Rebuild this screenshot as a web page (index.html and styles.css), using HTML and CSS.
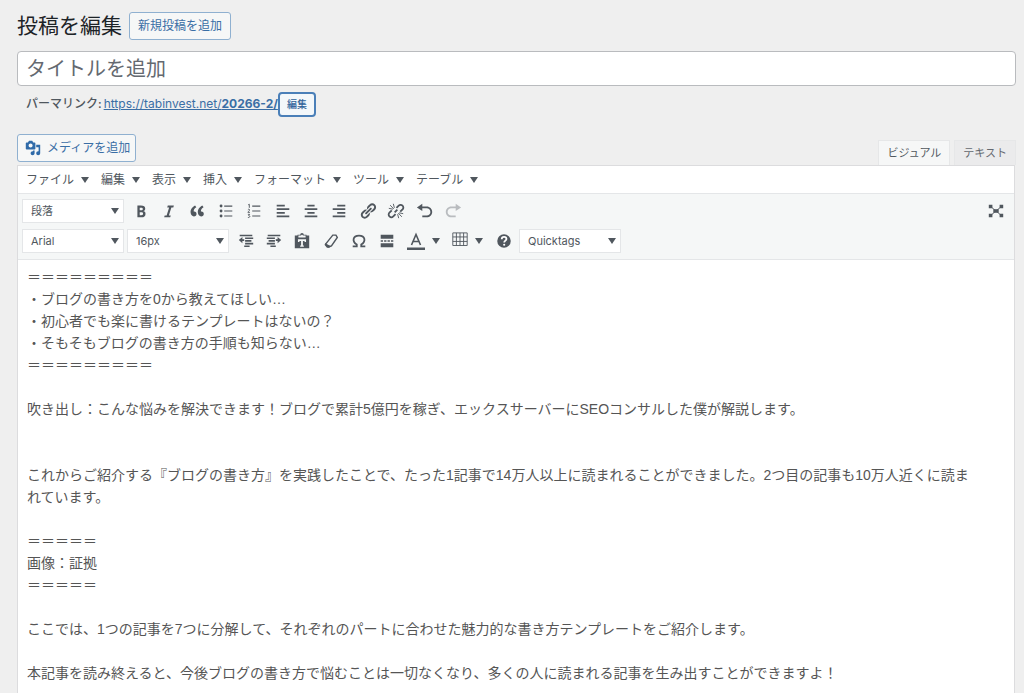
FILE: index.html
```html
<!DOCTYPE html>
<html lang="ja">
<head>
<meta charset="utf-8">
<meta name="viewport" content="width=device-width, initial-scale=1">
<title>投稿を編集</title>
<link rel="stylesheet" href="styles.css">
</head>
<body>
<main class="page">
  <header class="page-head">
    <h1 class="page-title">投稿を編集</h1>
    <a class="btn" href="#">新規投稿を追加</a>
  </header>

  <input class="title-input" type="text" placeholder="タイトルを追加" aria-label="タイトルを追加">

  <div class="permalink">
    <span class="permalink-label">パーマリンク:</span>
    <a class="permalink-url" href="#">https://tabinvest.net/<b>20266-2/</b></a>
    <button class="btn-small" type="button">編集</button>
  </div>

  <div class="editor-tools">
    <button class="btn btn-media" type="button">
      <svg class="media-icon" viewBox="0 0 20 20" aria-hidden="true"><path d="M13 11V4c0-.55-.45-1-1-1h-1.67L9 1H5L3.67 3H2c-.55 0-1 .45-1 1v7c0 .55.45 1 1 1h10c.55 0 1-.45 1-1zM7 4.5c1.38 0 2.5 1.12 2.5 2.5S8.38 9.5 7 9.5 4.5 8.38 4.5 7 5.62 4.5 7 4.5zM14 6h5v10.5c0 1.38-1.12 2.5-2.5 2.5S14 17.88 14 16.5s1.12-2.5 2.5-2.5c.17 0 .34.02.5.05V9h-3V6zm-4 8.05V13h2v3.5c0 1.38-1.12 2.5-2.5 2.5S7 17.88 7 16.5 8.12 14 9.5 14c.17 0 .34.02.5.05z"/></svg>
      メディアを追加
    </button>
    <div class="tabs">
      <button class="tab tab-active" type="button">ビジュアル</button>
      <button class="tab" type="button">テキスト</button>
    </div>
  </div>

  <section class="editor">
    <nav class="menubar">
      <button class="menu" type="button">ファイル<span class="caret"></span></button>
      <button class="menu" type="button">編集<span class="caret"></span></button>
      <button class="menu" type="button">表示<span class="caret"></span></button>
      <button class="menu" type="button">挿入<span class="caret"></span></button>
      <button class="menu" type="button">フォーマット<span class="caret"></span></button>
      <button class="menu" type="button">ツール<span class="caret"></span></button>
      <button class="menu" type="button">テーブル<span class="caret"></span></button>
    </nav>

    <div class="toolbar">
      <div class="row">
        <div class="pick"><select aria-label="段落"><option>段落</option></select><span class="caret"></span></div>
        <div class="group">
          <button class="tool" type="button" aria-label="太字"><svg viewBox="0 0 20 20"><path d="M6 4v13h4.54c1.37 0 2.46-.33 3.26-1 .8-.66 1.2-1.58 1.2-2.77 0-.84-.17-1.51-.51-2.01s-.9-.85-1.67-1.03v-.09c.57-.1 1.02-.4 1.36-.9s.51-1.13.51-1.91c0-1.14-.39-1.98-1.17-2.5C12.75 4.26 11.5 4 9.78 4H6zm2.57 5.15V6.26h1.36c.73 0 1.27.11 1.61.32.34.22.51.58.51 1.07 0 .54-.16.92-.47 1.15s-.82.35-1.51.35h-1.5zm0 2.19h1.6c1.44 0 2.16.53 2.16 1.61 0 .6-.17 1.05-.51 1.34s-.86.43-1.57.43H8.57v-3.38z"/></svg></button>
          <button class="tool" type="button" aria-label="イタリック"><svg viewBox="0 0 20 20"><path d="M14.78 6h-2.13l-2.8 9h2.12l-.62 2H4.6l.62-2h2.14l2.8-9H8.03l.62-2h6.75z"/></svg></button>
          <button class="tool" type="button" aria-label="引用"><svg viewBox="0 0 20 20"><path d="M9.49 13.22c0-.74-.2-1.38-.61-1.9-.62-.78-1.83-.88-2.53-.72-.29-1.65 1.11-3.75 2.92-4.65L7.88 4c-2.73 1.3-5.42 4.28-4.96 8.05C3.21 14.43 4.59 16 6.54 16c.85 0 1.56-.25 2.12-.75s.83-1.18.83-2.03zm8.05 0c0-.74-.2-1.38-.61-1.9-.63-.78-1.83-.88-2.53-.72-.29-1.65 1.11-3.75 2.92-4.65L15.93 4c-2.73 1.3-5.41 4.28-4.95 8.05.29 2.38 1.66 3.95 3.61 3.95.85 0 1.56-.25 2.12-.75s.83-1.18.83-2.03z"/></svg></button>
        </div>
        <div class="group">
          <button class="tool" type="button" aria-label="箇条書き"><svg viewBox="0 0 20 20"><circle cx="4.5" cy="4.5" r="1.6"/><circle cx="4.5" cy="10" r="1.6"/><circle cx="4.5" cy="15.5" r="1.6"/><path d="M8 4h9v1.2H8zM8 9.4h9v1.2H8zM8 15h9v1.2H8z"/></svg></button>
          <button class="tool" type="button" aria-label="番号付きリスト"><svg viewBox="0 0 20 20"><path d="M8 4h9v1.2H8zM8 9.4h9v1.2H8zM8 15h9v1.2H8z"/><path class="line thin" d="M3.5 3.2l1.3-.7v4M3.2 8.6c.4-.8 2-.7 2 .3 0 .8-2 1.6-2 2.6h2.3M3.2 13.7h2l-1.1 1.5c1.800 0 1.700 2.400-.9 2"/></svg></button>
        </div>
        <div class="group">
          <button class="tool" type="button" aria-label="左寄せ"><svg viewBox="0 0 20 20"><path d="M12 5V3H3v2h9zm5 4V7H3v2h14zm-5 4v-2H3v2h9zm5 4v-2H3v2h14z"/></svg></button>
          <button class="tool" type="button" aria-label="中央揃え"><svg viewBox="0 0 20 20"><path d="M14 5V3H6v2h8zm3 4V7H3v2h14zm-3 4v-2H6v2h8zm3 4v-2H3v2h14z"/></svg></button>
          <button class="tool" type="button" aria-label="右寄せ"><svg viewBox="0 0 20 20"><path d="M17 5V3H8v2h9zm0 4V7H3v2h14zm0 4v-2H8v2h9zm0 4v-2H3v2h14z"/></svg></button>
        </div>
        <div class="group">
          <button class="tool" type="button" aria-label="リンクの挿入"><svg viewBox="0 0 20 20"><path d="M17.74 2.76c1.68 1.69 1.68 4.41 0 6.1l-1.53 1.52c-1.12 1.12-2.7 1.47-4.14 1.09l2.62-2.61.76-.77.76-.76c.84-.84.84-2.2 0-3.04-.84-.85-2.2-.85-3.04 0l-.77.76-3.38 3.38c-.37-1.44-.02-3.02 1.1-4.14l1.52-1.53c1.69-1.68 4.42-1.68 6.1 0zM8.59 13.43l5.34-5.34c.42-.42.42-1.1 0-1.52-.44-.43-1.13-.39-1.53 0l-5.33 5.34c-.42.42-.42 1.1 0 1.52.44.43 1.13.39 1.52 0zm-.76 2.29l4.14-4.15c.38 1.44.03 3.02-1.09 4.14l-1.52 1.53c-1.69 1.68-4.41 1.68-6.1 0-1.68-1.68-1.68-4.42 0-6.1l1.53-1.52c1.12-1.12 2.7-1.47 4.14-1.1l-4.14 4.15c-.85.84-.85 2.2 0 3.05.84.84 2.2.84 3.04 0z"/></svg></button>
          <button class="tool" type="button" aria-label="リンクの削除"><svg viewBox="0 0 20 20"><path class="line" d="M10.500 6.500l2.500-2.500a3 3 0 0 1 4.300 4.200l-2.600 2.600M9.500 13.500L7 16a3 3 0 0 1-4.300-4.200l2.600-2.600M8.500 11.500l3-3"/><path class="line thin" d="M7 2l1.200 4.500M3.500 3.500l4 4.200M2 7l4.500 1M13 18l-1.200-4.500M16.500 16.500l-4-4.200M18 13l-4.500-1"/></svg></button>
        </div>
        <div class="group">
          <button class="tool" type="button" aria-label="取り消し"><svg viewBox="0 0 20 20"><path d="M12 5H7V2L1 6l6 4V7h5c2.2 0 4 1.8 4 4s-1.8 4-4 4H7v2h5c3.3 0 6-2.7 6-6s-2.7-6-6-6z"/></svg></button>
          <button class="tool" type="button" aria-label="やり直し" disabled><svg viewBox="0 0 20 20"><path d="M8 5h5V2l6 4-6 4V7H8c-2.200 0-4 1.800-4 4s1.800 4 4 4h5v2H8c-3.300 0-6-2.700-6-6s2.700-6 6-6z"/></svg></button>
        </div>
        <button class="tool tool-full" type="button" aria-label="集中執筆モード"><svg viewBox="0 0 20 20"><path d="M7 8h6v4H7z"/><path d="M2 3h4v4H2zM14 3h4v4h-4zM2 13h4v4H2zM14 13h4v4h-4z"/><path class="line thin" d="M4 5l12 10M16 5L4 15"/></svg></button>
      </div>

      <div class="row">
        <div class="pick"><select aria-label="フォント"><option>Arial</option></select><span class="caret"></span></div>
        <div class="pick"><select aria-label="フォントサイズ"><option>16px</option></select><span class="caret"></span></div>
        <div class="group">
          <button class="tool" type="button" aria-label="インデントを減らす"><svg viewBox="0 0 20 20"><path d="M3 3h14v1.800H3zM9 6h9v1.800H9zM9 9h7v1.800H9zM9 12h9v1.800H9zM8 15h6v1.800H8zM6 5.500v7L2 9z"/><path d="M5 8h3v2H5z"/></svg></button>
          <button class="tool" type="button" aria-label="インデントを増やす"><svg viewBox="0 0 20 20"><path d="M3 3h14v1.800H3zM2 6h9v1.800H2zM4 9h7v1.800H4zM2 12h9v1.800H2zM6 15h6v1.800H6zM14 5.500v7L18 9z"/><path d="M12 8h3v2h-3z"/></svg></button>
          <button class="tool" type="button" aria-label="テキストとしてペースト"><svg viewBox="0 0 20 20"><path fill-rule="evenodd" d="M2 4h3V3h3a2 2 0 0 1 4 0h3v1h3v14H2zM6 4v2h8V4h-3a1 1 0 0 0-2 0zM5.500 8v3H7l.3-1H9v5H8v1.500h4V15h-1v-5h1.700l.3 1h1.500V8z"/></svg></button>
        </div>
        <div class="group">
          <button class="tool" type="button" aria-label="書式設定をクリア"><svg viewBox="0 0 20 20"><path class="line medium" d="M12 3.500h3.500L17 6l-6.500 9.500L7 16.500 4 13.500z"/><path d="M3.500 12.500l5 2.500 1.800 1-2.300 1.500H5.500l-2.500-3z"/></svg></button>
          <button class="tool" type="button" aria-label="特殊文字"><svg viewBox="0 0 20 20"><path class="line" d="M3 16h4.500v-2C2 10.500 3 4 10 4s8 6.500 2.500 10v2H17"/></svg></button>
          <button class="tool" type="button" aria-label="続きを読む"><svg viewBox="0 0 20 20"><path d="M3 3h14v4.500H3zM3 9.200h2.600v1.600H3zM6.800 9.200h2.600v1.600H6.800zM10.600 9.200h2.600v1.600h-2.600zM14.400 9.200H17v1.600h-2.600zM3 12.500h14V17H3z"/></svg></button>
        </div>
        <button class="tool tool-split" type="button" aria-label="テキスト色"><svg class="wide" viewBox="0 0 20 20"><path d="M1 16.500h18V19H1z"/><path class="line medium" d="M5.500 14L10 3.500 14.500 14M7 10.500h6"/></svg><span class="caret"></span></button>
        <button class="tool tool-split tool-table" type="button" aria-label="表"><svg viewBox="0 0 20 20"><path class="line thin" d="M2 1h16v14H2zM2 5.500h16M2 10.500h16M6 1v14M10 1v14M14 1v14"/></svg><span class="caret"></span></button>
        <button class="tool" type="button" aria-label="ヘルプ"><svg viewBox="0 0 20 20"><circle cx="10" cy="10" r="7.500"/><path class="mark" d="M7.500 8c0-3.500 5.200-3.200 5.200-.3 0 1.800-2.500 2-2.500 4"/><circle class="dot" cx="10.200" cy="14.200" r="1.200"/></svg></button>
        <div class="pick"><select aria-label="Quicktags"><option>Quicktags</option></select><span class="caret"></span></div>
      </div>
    </div>

    <article class="content" contenteditable="true" spellcheck="false">
      <p>＝＝＝＝＝＝＝＝＝<br>・ブログの書き方を0から教えてほしい…<br>・初心者でも楽に書けるテンプレートはないの？<br>・そもそもブログの書き方の手順も知らない…<br>＝＝＝＝＝＝＝＝＝</p>
      <p>吹き出し：こんな悩みを解決できます！ブログで累計5億円を稼ぎ、エックスサーバーにSEOコンサルした僕が解説します。<br><br></p>
      <p>これからご紹介する『ブログの書き方』を実践したことで、たった1記事で14万人以上に読まれることができました。2つ目の記事も10万人近くに読ま<br>れています。</p>
      <p>＝＝＝＝＝<br>画像：証拠<br>＝＝＝＝＝</p>
      <p>ここでは、1つの記事を7つに分解して、それぞれのパートに合わせた魅力的な書き方テンプレートをご紹介します。</p>
      <p>本記事を読み終えると、今後ブログの書き方で悩むことは一切なくなり、多くの人に読まれる記事を生み出すことができますよ！</p>
    </article>
  </section>
</main>
</body>
</html>
```

FILE: styles.css
```css
* {
  box-sizing: border-box;
}

body {
  margin: 0;
  background: #efefef;
  color: #50575e;
  font: 12px/18px Inter, "Noto Sans CJK JP", sans-serif;
}

button,
input,
select {
  margin: 0;
  font: inherit;
  color: inherit;
}

button {
  padding: 0;
  border: 0;
  background: none;
  white-space: nowrap;
}

.page {
  display: flex;
  flex-direction: column;
  min-height: 100vh;
  padding: 11px 8px 0 17px;
}

.page-head {
  display: flex;
  align-items: center;
  gap: 7px;
  height: 30px;
}

.page-title {
  margin: 0;
  color: #1d2327;
  font-size: 21px;
  line-height: 30px;
  font-weight: 400;
}

.btn {
  display: flex;
  align-items: center;
  height: 28px;
  padding: 0 8px;
  border: 1px solid #8fb0d0;
  border-radius: 3px;
  background: #f6f7f7;
  color: #3a6ea5;
  text-decoration: none;
}

.title-input {
  width: 100%;
  height: 35px;
  margin-top: 10px;
  padding: 0 8px;
  border: 1px solid #b9bbbe;
  border-radius: 4px;
  background: #fff;
  font-size: 20px;
}

.title-input::placeholder {
  color: #646970;
  opacity: 1;
}

.permalink {
  display: flex;
  align-items: center;
  height: 26px;
  margin-top: 5px;
  padding-left: 9px;
}

.permalink-label {
  margin-right: 2px;
  font-weight: 500;
}

.permalink-url {
  color: #3a6ea5;
}

.btn-small {
  height: 25px;
  padding: 0 7px;
  border: 2px solid #4a7fb8;
  border-radius: 4px;
  background: #f3f7fa;
  color: #2f6299;
  font-size: 10px;
  font-weight: 500;
}

.editor-tools {
  display: flex;
  justify-content: space-between;
  height: 48px;
  padding-top: 17px;
}

.btn-media {
  gap: 6px;
  padding: 0 5px 0 7px;
}

.media-icon {
  width: 16px;
  height: 16px;
  fill: #2f6aa8;
}

.tabs {
  display: flex;
  align-items: flex-end;
  gap: 4px;
}

.tab {
  height: 25px;
  padding: 0 8px;
  border: 1px solid #e6e7e8;
  border-bottom: 0;
  background: #ebebec;
  color: #646970;
  font-size: 11px;
}

.tab-active {
  background: #f6f7f7;
  color: #50575e;
}

.editor {
  flex: 1;
  margin-right: 1px;
  border: 1px solid #dcdcde;
  border-bottom: 0;
  background: #fff;
}

.menubar {
  display: flex;
  gap: 12px;
  height: 27px;
  padding-left: 8px;
}

.menu {
  display: flex;
  align-items: center;
  gap: 7px;
}

.caret {
  flex: none;
  border: 4px solid transparent;
  border-top: 6px solid #50575e;
  border-bottom: 0;
}

.toolbar {
  display: flex;
  flex-direction: column;
  gap: 5px;
  padding: 4px 4px 6px;
  border-top: 1px solid #e4e6e8;
  border-bottom: 1px solid #e4e6e8;
  background: #f5f7f7;
}

.row {
  display: flex;
  align-items: center;
  gap: 1px;
  height: 25px;
}

.pick {
  position: relative;
  width: 102px;
  margin-right: 2px;
}

.pick select {
  display: block;
  width: 100%;
  height: 24px;
  padding: 0 8px;
  border: 1px solid #e4e6e8;
  border-radius: 0;
  background: #fff;
  appearance: none;
  font-size: 11px;
}

.pick .caret {
  position: absolute;
  top: 9px;
  right: 5px;
  pointer-events: none;
}

.group {
  display: flex;
}

.tool {
  display: flex;
  align-items: center;
  justify-content: center;
  width: 28px;
  height: 24px;
}

.tool svg {
  width: 18px;
  height: 18px;
  fill: #50575e;
}

.tool .line {
  fill: none;
  stroke: #50575e;
  stroke-width: 2;
}

.tool .medium {
  stroke-width: 1.6;
}

.tool .thin {
  stroke-width: 1;
}

.tool .mark {
  fill: none;
  stroke: #fff;
  stroke-width: 2;
}

.tool .dot {
  fill: #fff;
}

.tool:disabled svg {
  fill: #b9bcbf;
}

.tool-full {
  margin-left: auto;
}

.tool-split {
  gap: 6px;
  width: 42px;
}

.tool-table {
  width: 44px;
}

.tool .wide {
  width: 20px;
  height: 20px;
}

.content {
  padding: 6px 8px 0 9px;
  outline: 0;
  color: #555;
  font: 14px/22px "Liberation Sans", "Noto Sans CJK JP", sans-serif;
}

.content p {
  margin: 0 0 22px;
}
```
